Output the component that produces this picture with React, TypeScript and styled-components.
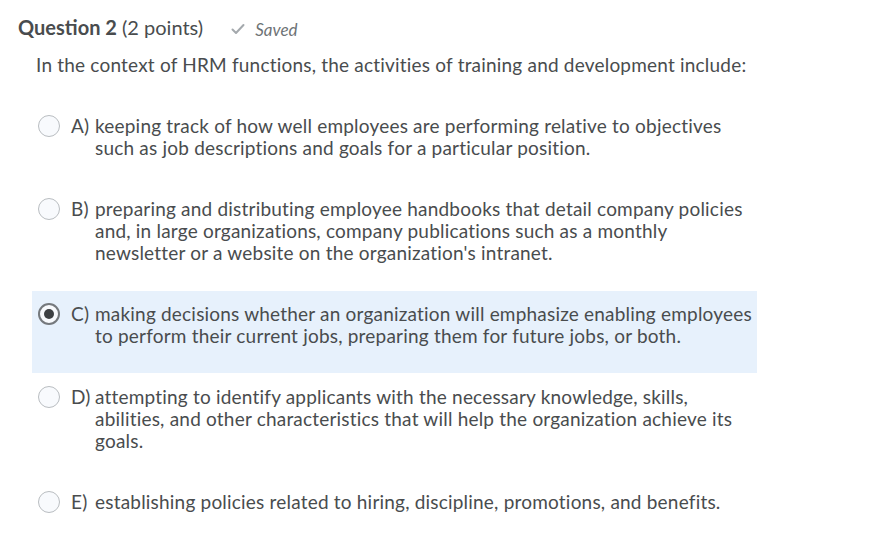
import React from "react"
import styled, { createGlobalStyle } from "styled-components"

const GlobalStyle = createGlobalStyle`
  html, body {
    margin: 0;
    padding: 0;
    background: #fff;
  }
  body {
    font-family: Lato, "Noto Sans", sans-serif;
    color: #494c4e;
  }
`

const Page = styled.div`
  padding: 13px 0 0 18px;
  width: 760px;
`

const Header = styled.div`
  display: flex;
  align-items: baseline;
  gap: 28px;
`

const Title = styled.h2`
  margin: 0;
  font-size: 20px;
  font-weight: 400;
  line-height: 28px;
  color: #494c4e;
  b {
    font-weight: 700;
  }
`

const Saved = styled.span`
  display: inline-flex;
  align-items: center;
  gap: 10px;
  font-size: 17px;
  font-style: italic;
  color: #6e7376;
`

const Prompt = styled.p`
  margin: 13px 0 27px 18px;
  font-size: 19px;
  line-height: 22px;
  letter-spacing: 0.2px;
`

const Options = styled.div`
  display: flex;
  flex-direction: column;
  gap: 1px;
  margin-left: 14px;
  width: 725px;
`

const Option = styled.label<{ $selected?: boolean }>`
  display: flex;
  align-items: flex-start;
  padding: 12px 4px 26px 6px;
  background: ${p => (p.$selected ? "#e7f1fc" : "transparent")};
  font-size: 19px;
  line-height: 22px;
  letter-spacing: 0.2px;
  cursor: pointer;
`

const Radio = styled.span<{ $checked?: boolean }>`
  flex: none;
  width: 22px;
  height: 22px;
  box-sizing: border-box;
  margin-top: 0;
  margin-right: 11px;
  border-radius: 50%;
  border: ${p => (p.$checked ? "2px solid #75797d" : "1px solid #b9bdc1")};
  background: #f8fafd;
  display: flex;
  align-items: center;
  justify-content: center;
  &::after {
    content: "";
    display: ${p => (p.$checked ? "block" : "none")};
    width: 10px;
    height: 10px;
    border-radius: 50%;
    background: #3d4043;
  }
`

const Letter = styled.span`
  flex: none;
  width: 24px;
`

const Text = styled.span`
  flex: 1;
`

const options = [
  "keeping track of how well employees are performing relative to objectives such as job descriptions and goals for a particular position.",
  "preparing and distributing employee handbooks that detail company policies and, in large organizations, company publications such as a monthly newsletter or a website on the organization's intranet.",
  "making decisions whether an organization will emphasize enabling employees to perform their current jobs, preparing them for future jobs, or both.",
  "attempting to identify applicants with the necessary knowledge, skills, abilities, and other characteristics that will help the organization achieve its goals.",
  "establishing policies related to hiring, discipline, promotions, and benefits.",
]

const App: React.FC = () => {
  const selected = 2
  return (
    <Page>
      <GlobalStyle />
      <Header>
        <Title>
          <b>Question 2</b> (2 points)
        </Title>
        <Saved>
          <svg width="14" height="12" viewBox="0 0 14 12">
            <path d="M1.5 6.5 L5 10 L12.5 2" fill="none" stroke="#a4a9ad" strokeWidth="2" strokeLinecap="round" strokeLinejoin="round" />
          </svg>
          Saved
        </Saved>
      </Header>
      <Prompt>In the context of HRM functions, the activities of training and development include:</Prompt>
      <Options>
        {options.map((o, i) => (
          <Option key={i} $selected={i === selected}>
            <Radio $checked={i === selected} />
            <Letter>{String.fromCharCode(65 + i)})</Letter>
            <Text>{o}</Text>
          </Option>
        ))}
      </Options>
    </Page>
  )
}

export default App
